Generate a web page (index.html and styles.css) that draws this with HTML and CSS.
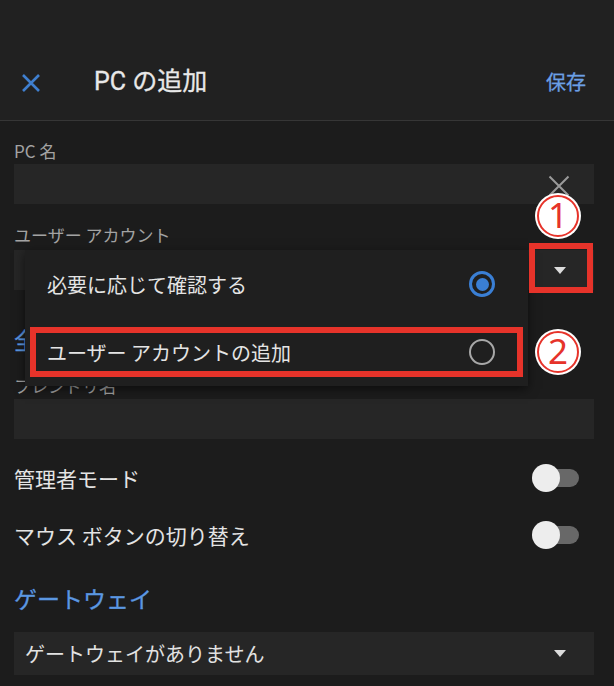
FILE: index.html
```html
<!DOCTYPE html>
<html lang="ja">
<head>
<meta charset="utf-8">
<title>PC の追加</title>
<link rel="stylesheet" href="styles.css">
</head>
<body>
<div class="screen">
  <header class="appbar">
    <svg class="close" viewBox="0 0 20 20" aria-hidden="true"><path d="M2 2L18 18M18 2L2 18"/></svg>
    <h1 class="title">PC の追加</h1>
    <span class="save">保存</span>
  </header>

  <main class="form">
    <div class="label first">PC 名</div>
    <div class="field">
      <svg class="clear" viewBox="0 0 22 22" aria-hidden="true"><path d="M1.5 1.5L20.5 20.5M20.5 1.5L1.5 20.5"/></svg>
    </div>

    <div class="label second">ユーザー アカウント</div>
    <div class="field select"><span class="value"></span><span class="caret"></span></div>

    <h2 class="section general">全般</h2>
    <div class="label third">フレンドリ名</div>
    <div class="field"></div>

    <div class="toggle-row first-row"><span>管理者モード</span><span class="switch"><span class="thumb"></span></span></div>
    <div class="toggle-row"><span>マウス ボタンの切り替え</span><span class="switch"><span class="thumb"></span></span></div>

    <h2 class="section gateway">ゲートウェイ</h2>
    <div class="field select tall"><span class="value">ゲートウェイがありません</span><span class="caret"></span></div>
  </main>

  <div class="menu">
    <div class="option"><span>必要に応じて確認する</span><span class="radio on"></span></div>
    <div class="option"><span>ユーザー アカウントの追加</span><span class="radio"></span></div>
  </div>

  <div class="mark box1"></div>
  <div class="mark box2"></div>
  <div class="num n1"><span>1</span></div>
  <div class="num n2"><span>2</span></div>
</div>
</body>
</html>
```

FILE: styles.css
```css
* { box-sizing: border-box; }
html, body {
  margin: 0;
  padding: 0;
  background: #1c1c1c;
}
body {
  font-family: "Noto Sans CJK JP", "Noto Sans", sans-serif;
  color: #e4e4e4;
}
.screen {
  position: relative;
  width: 614px;
  height: 686px;
  overflow: hidden;
  background: #1c1c1c;
}

/* App bar */
.appbar {
  height: 121px;
  padding: 44px 28px 0 21px;
  display: flex;
  align-items: center;
  background: #212121;
  border-bottom: 1px solid #363636;
}
.close {
  width: 20px;
  height: 20px;
  fill: none;
  stroke: #3f7fcf;
  stroke-width: 2.6;
  margin-top: 1px;
}
.title {
  margin: 0 0 0 53px;
  font-family: "Roboto", "Noto Sans CJK JP", sans-serif;
  font-size: 25px;
  font-weight: 400;
  color: #e8e8e8;
  flex: 1;
  line-height: 30px;
  -webkit-text-stroke: 0.3px #e8e8e8;
}
.save {
  font-size: 20px;
  font-weight: 400;
  color: #6b9fe4;
  line-height: 26px;
  -webkit-text-stroke: 0.3px #6b9fe4;
}

/* Form */
.form {
  padding: 0 20px 0 14px;
  display: flex;
  flex-direction: column;
}
.label {
  font-size: 17px;
  line-height: 22px;
  color: #a3a3a3;
  margin-bottom: 2px;
}
.label.first { margin-top: 19px; }
.label.second { margin-top: 20px; margin-bottom: 4px; }
.label.third { margin-top: 21px; }
.field {
  height: 40px;
  background: #262626;
  display: flex;
  align-items: center;
  justify-content: flex-end;
  padding-right: 24px;
}
.field.tall {
  height: 43px;
  margin-top: 19px;
}
.clear {
  width: 22px;
  height: 22px;
  fill: none;
  stroke: #9a9a9a;
  stroke-width: 2;
  margin-top: 3px;
}
.select {
  justify-content: space-between;
  padding: 0 28px 0 11px;
}
.select .value {
  font-size: 20px;
  color: #e2e2e2;
  line-height: 26px;
}
.caret {
  width: 0;
  height: 0;
  border-left: 6.5px solid transparent;
  border-right: 6.5px solid transparent;
  border-top: 7px solid #dcdcdc;
}
.section {
  margin: 0;
  font-size: 23px;
  font-weight: 400;
  line-height: 30px;
  color: #5b97e2;
  -webkit-text-stroke: 0.3px #5b97e2;
}
.section.general { margin-top: 34px; }
.section.gateway { margin-top: 20px; }

.toggle-row {
  height: 57px;
  display: flex;
  align-items: center;
  justify-content: space-between;
  font-size: 21px;
  color: #e4e4e4;
  padding-right: 15px;
}
.toggle-row.first-row { margin-top: 10px; }
.switch {
  position: relative;
  width: 47px;
  height: 28px;
}
.switch::before {
  content: "";
  position: absolute;
  left: 12px;
  top: 5px;
  width: 35px;
  height: 18px;
  border-radius: 9px;
  background: #686868;
}
.thumb {
  position: absolute;
  left: 0;
  top: 0;
  width: 28px;
  height: 28px;
  border-radius: 50%;
  background: #ededed;
}

/* Dropdown menu overlay */
.menu {
  position: absolute;
  left: 25px;
  top: 250px;
  width: 503px;
  background: #1f1f1f;
  box-shadow: 0 3px 10px rgba(0, 0, 0, 0.55);
}
.option {
  height: 68px;
  display: flex;
  align-items: center;
  justify-content: space-between;
  padding: 0 33px 0 22px;
  font-size: 20px;
  color: #e4e4e4;
}
.radio {
  width: 26px;
  height: 26px;
  border-radius: 50%;
  border: 2.5px solid #a8a8a8;
  display: flex;
  align-items: center;
  justify-content: center;
}
.radio.on {
  border: 3px solid #3a7fd5;
}
.radio.on::after {
  content: "";
  width: 13px;
  height: 13px;
  border-radius: 50%;
  background: #3a7fd5;
}

/* Annotations */
.mark {
  position: absolute;
  border: 6px solid #e6332a;
}
.box1 { left: 529px; top: 243px; width: 64px; height: 50px; }
.box2 { left: 30px; top: 327px; width: 493px; height: 50px; }
.num {
  position: absolute;
  width: 46px;
  height: 46px;
  border-radius: 50%;
  background: #ffffff;
  display: flex;
  align-items: center;
  justify-content: center;
}
.num span {
  width: 42px;
  height: 42px;
  border-radius: 50%;
  border: 2.5px solid #e6332a;
  color: #e6332a;
  font-family: "Noto Sans", sans-serif;
  font-size: 35px;
  line-height: 36px;
  text-align: center;
}
.n1 { left: 535px; top: 193px; }
.n2 { left: 535px; top: 329px; }
```
